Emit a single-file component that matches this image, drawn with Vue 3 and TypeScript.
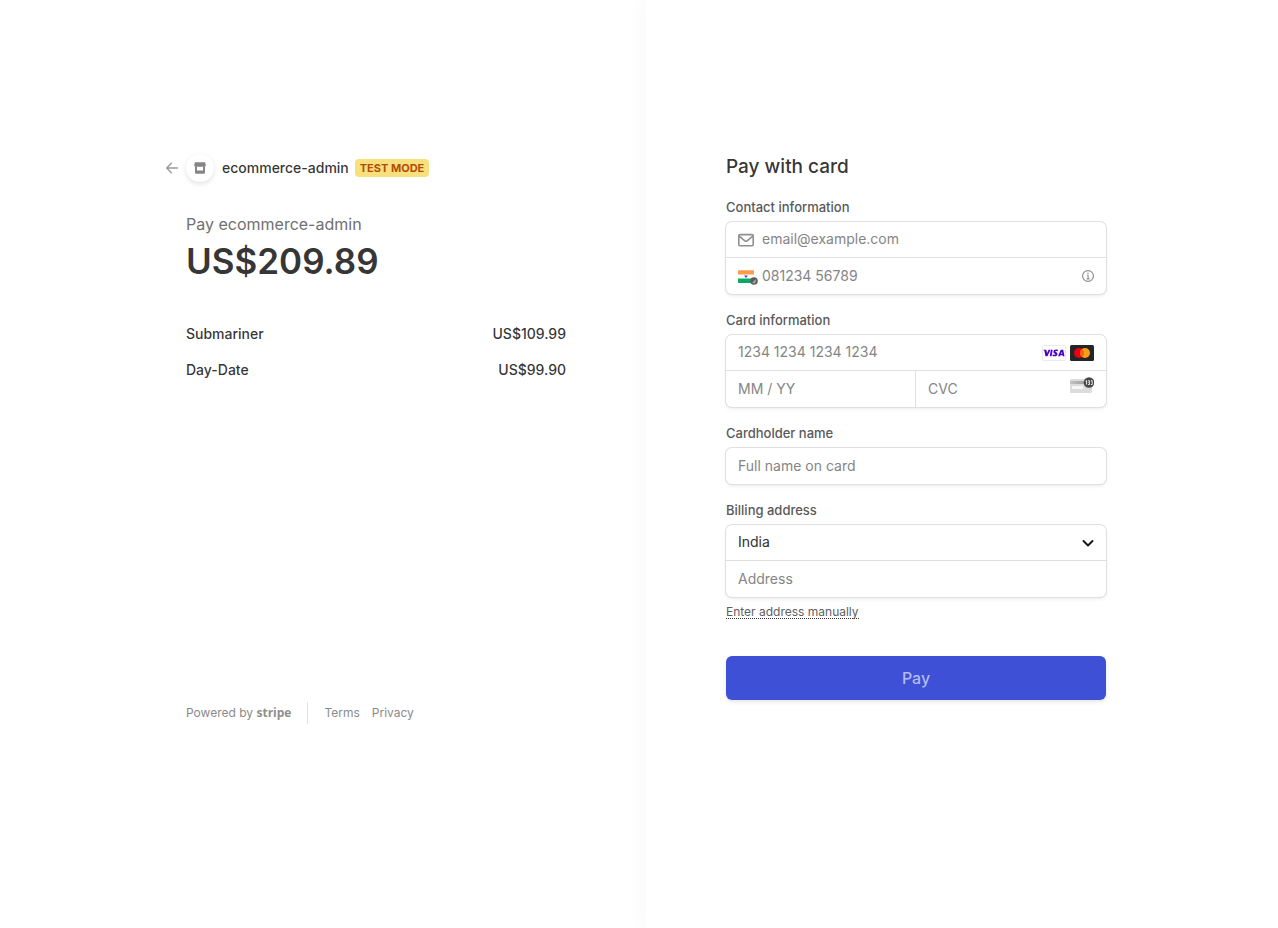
<script setup lang="ts">
import { ref } from 'vue'

interface LineItem {
  name: string
  price: string
}

const items: LineItem[] = [
  { name: 'Submariner', price: 'US$109.99' },
  { name: 'Day-Date', price: 'US$99.90' },
]

const email = ref('')
const phone = ref('')
const cardNumber = ref('')
const expiry = ref('')
const cvc = ref('')
const holder = ref('')
const country = ref('IN')
const address = ref('')
</script>

<template>
  <div class="page">
    <section class="summary">
      <div class="summary-inner">
        <header class="merchant">
          <a class="back" href="#" aria-label="Back">
            <svg width="12" height="12" viewBox="0 0 12 12" fill="none" stroke="#9a9a9a" stroke-width="1.4" stroke-linecap="round" stroke-linejoin="round">
              <path d="M11.5 6H.8M5.4 1.2L.7 6l4.7 4.8" />
            </svg>
          </a>
          <span class="avatar">
            <svg width="12" height="12" viewBox="0 0 12 12" fill="#858585">
              <path d="M1 .3h10l.8 2.600v.6a1.300 1.300 0 0 1-1.300 1.300h-9A1.300 1.300 0 0 1 .2 3.500v-.6z" />
              <path d="M1 4.500h2v4h6v-4h2v6a1.200 1.200 0 0 1-1.200 1.200H2.200A1.200 1.200 0 0 1 1 10.500z" />
            </svg>
          </span>
          <span class="merchant-name">ecommerce-admin</span>
          <span class="badge">TEST MODE</span>
        </header>
        <p class="pay-to">Pay ecommerce-admin</p>
        <p class="total">US$209.89</p>
        <ul class="items">
          <li v-for="item in items" :key="item.name">
            <span>{{ item.name }}</span>
            <span>{{ item.price }}</span>
          </li>
        </ul>
        <footer class="footer">
          <a class="powered" href="#">Powered by <span class="stripe">stripe</span></a>
          <span class="rule"></span>
          <a href="#">Terms</a>
          <a href="#">Privacy</a>
        </footer>
      </div>
    </section>

    <main class="payment">
      <form class="form" @submit.prevent>
        <h1>Pay with card</h1>

        <div class="group">
          <label for="email">Contact information</label>
          <div class="box">
            <div class="row">
              <svg class="mail" width="16" height="16" viewBox="0 0 16 16" fill="none" stroke="#8f8f8f" stroke-width="1.6" stroke-linejoin="round">
                <rect x=".8" y="2.600" width="14.400" height="11.200" rx="1.200" />
                <path d="M1.200 4.200L6.900 8.800a1.700 1.700 0 0 0 2.200 0l5.700-4.600" />
              </svg>
              <input id="email" v-model="email" type="email" placeholder="email@example.com" />
            </div>
            <div class="row">
              <button class="flag" type="button" aria-label="India">
                <svg width="20" height="18" viewBox="0 0 20 18">
                  <path fill="#fff" d="M0 4h16v11H0z" />
                  <path fill="#ff9a4a" d="M0 4a.8.8 0 0 1 .8-.8h14.400A.8.8 0 0 1 16 4v3.500H0z" />
                  <path fill="#0aa868" d="M0 11.500h16v3.700a.8.8 0 0 1-.8.8H.8a.8.8 0 0 1-.8-.8z" />
                  <path fill="#5540c8" d="M6 8.500h4L8 10.900z" />
                  <circle cx="16" cy="14" r="3.800" fill="#5c5c5c" />
                  <path d="M14.200 15.800l3.600-3.800v2.800l-1.400 1.600z" fill="#a8a8a8" />
                </svg>
              </button>
              <input v-model="phone" type="tel" aria-label="Phone number" placeholder="081234 56789" />
              <svg class="info" width="12" height="12" viewBox="0 0 12 12" fill="none" stroke="#8f8f8f">
                <circle cx="6" cy="6" r="5.400" stroke-width="1.200" />
                <path d="M4.800 5.200h1.300v3.600M4.600 8.900h3" stroke-width="1.100" />
                <circle cx="6" cy="3.200" r=".8" fill="#8f8f8f" stroke="none" />
              </svg>
            </div>
          </div>
        </div>

        <div class="group">
          <label for="card">Card information</label>
          <div class="box">
            <div class="row">
              <input id="card" v-model="cardNumber" type="text" placeholder="1234 1234 1234 1234" />
              <span class="brands">
                <svg width="24" height="16" viewBox="0 0 24 16" role="img" aria-label="Visa">
                  <rect x=".5" y=".5" width="23" height="15" rx="1" fill="#fff" stroke="#ebebeb" />
                  <g fill="#4b00c8">
                    <path d="M1.200 4.700h2.500c.5 0 .7.200.8.600l.5 3 1.600-3.600h2L5.400 11.200H3.500L2.500 6.200C2.400 5.600 2 5.300 1.200 5z" />
                    <path d="M8.900 4.700h1.800l-1.200 6.500H7.700z" />
                    <path d="M15.900 4.900l-.3 1.500c-1.500-.6-2.300-.2-2.300.2 0 .6 2.200.8 2.200 2.400 0 2.300-2.900 2.800-5 1.900l.3-1.600c1.500.8 2.700.5 2.700 0 0-.7-2.100-.7-2.100-2.400 0-2 2.300-2.800 4.500-2z" />
                    <path fill-rule="evenodd" d="M19 4.700h2.200l1.300 6.500h-1.700l-.2-1h-2.200l-.5 1h-1.900l2.500-6c.1-.3.300-.5.500-.5zM19.900 6.700L19 8.800h1.300z" />
                  </g>
                </svg>
                <svg width="24" height="16" viewBox="0 0 24 16" role="img" aria-label="Mastercard">
                  <rect width="24" height="16" rx="1.500" fill="#252525" />
                  <circle cx="9" cy="8" r="5" fill="#eb001b" />
                  <circle cx="15" cy="8" r="5" fill="#f79e1b" />
                  <path d="M12 4a5 5 0 0 1 0 8 5 5 0 0 1 0-8z" fill="#ff5f00" />
                </svg>
              </span>
            </div>
            <div class="row split">
              <div class="cell">
                <input v-model="expiry" type="text" aria-label="Expiration" placeholder="MM / YY" />
              </div>
              <div class="cell">
                <input v-model="cvc" type="text" aria-label="CVC" placeholder="CVC" />
                <svg width="24" height="20" viewBox="0 0 24 20">
                  <defs>
                    <linearGradient id="stripe-fade" x2="1">
                      <stop offset="0" stop-color="#c4c4c4" />
                      <stop offset="1" stop-color="#8c8c8c" />
                    </linearGradient>
                  </defs>
                  <rect y="4" width="22" height="14" rx="1.500" fill="#dcdcdc" />
                  <path d="M0 6h22v3H0z" fill="url(#stripe-fade)" />
                  <path d="M2 11h11v3H2z" fill="#f6f6f6" />
                  <circle cx="19" cy="7.500" r="5.300" fill="#484848" />
                  <path d="M15.600 6.300l1-.7v4M18.200 5.700h1.200v1.700h-.9M19.400 7.400v2.100h-1.300M20.900 5.700h1.300v3.800h-1.300" fill="none" stroke="#fff" stroke-width=".9" />
                </svg>
              </div>
            </div>
          </div>
        </div>

        <div class="group">
          <label for="holder">Cardholder name</label>
          <div class="box">
            <div class="row">
              <input id="holder" v-model="holder" type="text" placeholder="Full name on card" />
            </div>
          </div>
        </div>

        <div class="group">
          <label for="country">Billing address</label>
          <div class="box">
            <div class="row">
              <select id="country" v-model="country">
                <option value="IN">India</option>
              </select>
              <svg class="chevron" width="12" height="12" viewBox="0 0 12 12" fill="none" stroke="#1a1a1a" stroke-width="2" stroke-linecap="round" stroke-linejoin="round">
                <path d="M1.500 4L6 8.500 10.500 4" />
              </svg>
            </div>
            <div class="row">
              <input v-model="address" type="text" aria-label="Address" placeholder="Address" />
            </div>
          </div>
          <a class="manual" href="#">Enter address manually</a>
        </div>

        <button class="submit" type="submit">Pay</button>
      </form>
    </main>
  </div>
</template>

<style>
body {
  margin: 0;
  background: #fff;
}
</style>

<style scoped>
.page,
.page * {
  box-sizing: border-box;
}

.page {
  display: grid;
  grid-template-columns: calc(50% + 7px) 1fr;
  min-height: 100vh;
  overflow: hidden;
  background: #fff;
  color: rgba(26, 26, 26, 0.9);
  font-family: Inter, "Liberation Sans", sans-serif;
  font-size: 14px;
}

.summary {
  display: flex;
  justify-content: flex-end;
  padding: 154px 80px 0 20px;
}

.summary-inner {
  display: flex;
  flex-direction: column;
  width: 380px;
  height: 571px;
}

.merchant {
  display: flex;
  align-items: center;
  height: 28px;
  margin-left: -20px;
  font-weight: 500;
}

.back {
  display: flex;
  width: 20px;
}

.avatar {
  display: flex;
  align-items: center;
  justify-content: center;
  width: 28px;
  height: 28px;
  border-radius: 50%;
  box-shadow: 0 2px 5px rgba(0, 0, 0, 0.12);
}

.merchant-name {
  margin-left: 8px;
  line-height: 18px;
}

.badge {
  margin-left: 6px;
  padding: 0 5px;
  border-radius: 4px;
  background: #f8e07e;
  color: #b34d09;
  font-size: 11px;
  font-weight: 700;
  line-height: 18px;
}

.pay-to {
  margin: 30px 0 0;
  color: #707070;
  font-size: 16px;
  font-weight: 400;
  line-height: 24px;
}

.total {
  margin: 2px 0 0;
  font-size: 35px;
  font-weight: 600;
  line-height: 46px;
}

.items {
  display: flex;
  flex-direction: column;
  gap: 16px;
  margin: 40px 0 0;
  padding: 0;
  list-style: none;
  font-weight: 500;
  line-height: 20px;
}

.items li {
  display: flex;
  justify-content: space-between;
}

.footer {
  display: flex;
  align-items: center;
  height: 24px;
  margin-top: auto;
  color: #8a8a8a;
  font-size: 12px;
}

.footer a {
  margin-right: 12px;
  color: inherit;
  line-height: 16px;
  text-decoration: none;
}

.footer .powered {
  margin-right: 16px;
}

.stripe {
  color: #8f8f8f;
  font-family: "Open Sans", sans-serif;
  font-weight: 700;
}

.rule {
  width: 1px;
  height: 22px;
  margin-right: 16px;
  background: #e3e3e3;
}

.payment {
  padding: 154px 20px 40px 80px;
  box-shadow: -8px 0 16px rgba(0, 0, 0, 0.02);
}

.form {
  width: 380px;
}

h1 {
  margin: 0 0 18px;
  font-size: 19px;
  font-weight: 500;
  line-height: 26px;
}

.group {
  margin-bottom: 17px;
}

.group label {
  display: block;
  height: 24px;
  color: #595959;
  font-size: 13px;
  font-weight: 500;
  line-height: 18px;
}

.box {
  border-radius: 6px;
  background: #fff;
  box-shadow: 0 0 0 1px #e0e0e0, 0 2px 4px rgba(0, 0, 0, 0.07), 0 1px 2px rgba(0, 0, 0, 0.05);
}

.row {
  display: flex;
  align-items: center;
  height: 36px;
  padding: 0 12px;
}

.row:not(:last-child) {
  border-bottom: 1px solid #e0e0e0;
}

.row input,
.row select {
  flex: 1;
  min-width: 0;
  height: 100%;
  padding: 0 0 2px;
  border: 0;
  outline: 0;
  background: none;
  color: #303030;
  font: inherit;
  appearance: none;
}

.row input::placeholder {
  color: #858585;
  opacity: 1;
}

.mail {
  margin-right: 8px;
}

.flag {
  display: flex;
  width: 24px;
  padding: 0;
  border: 0;
  background: none;
}

.brands {
  display: flex;
  gap: 4px;
}

.row.split {
  padding: 0;
}

.cell {
  display: flex;
  align-items: center;
  width: 50%;
  height: 100%;
  padding: 0 12px;
}

.cell:first-child {
  border-right: 1px solid #e0e0e0;
}

.cell svg {
  margin-bottom: 8px;
}

.manual {
  display: inline-block;
  margin-top: 8px;
  border-bottom: 1px dotted #303030;
  color: #606060;
  font-size: 12px;
  line-height: 13px;
  text-decoration: none;
}

.submit {
  display: block;
  width: 100%;
  height: 44px;
  margin-top: 37px;
  border: 0;
  border-radius: 6px;
  background: #3e50d5;
  box-shadow: 0 2px 4px rgba(0, 0, 0, 0.1);
  color: #b4bbee;
  font: 500 16px Inter, "Liberation Sans", sans-serif;
}
</style>
